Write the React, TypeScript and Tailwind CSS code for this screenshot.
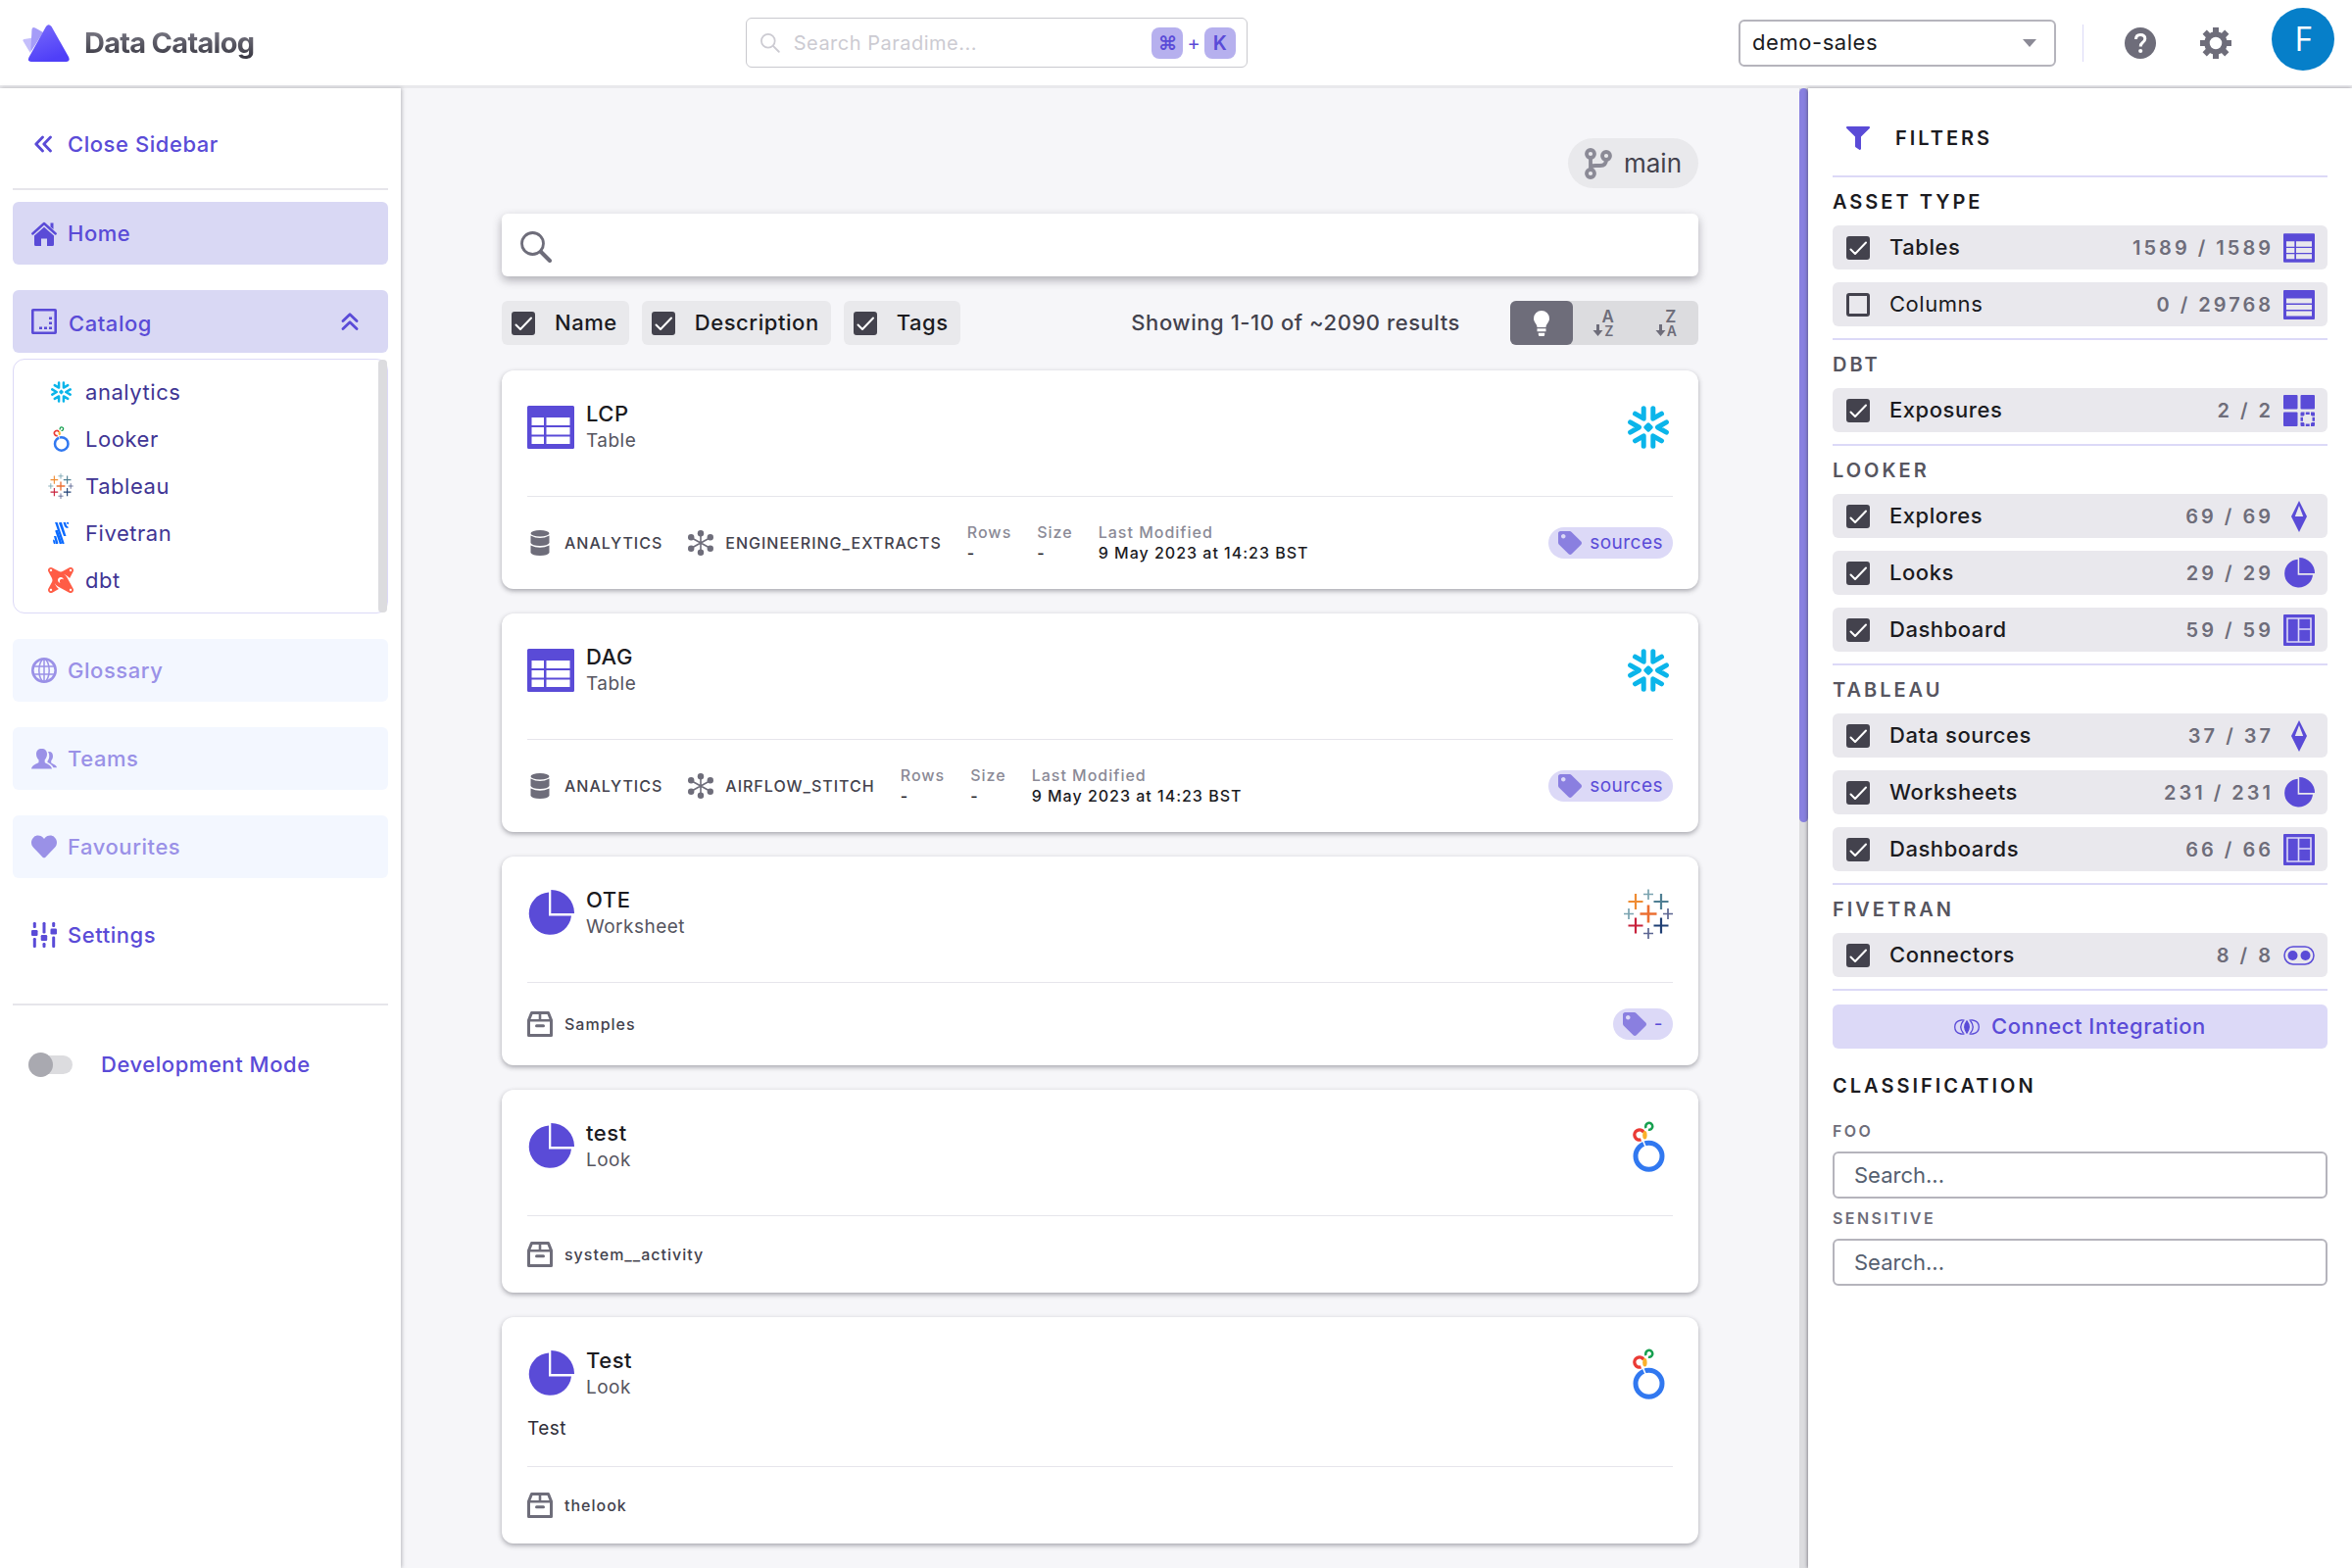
import type { ReactNode } from "react";
import { FaFilter, FaHeart, FaTag } from "react-icons/fa";
import { SiDbt } from "react-icons/si";

/* ==== Logos ==== */
const ParadimeLogo = () => (
  <svg className="w-12 h-[38px]" viewBox="0 0 48 38">
    <defs>
      <linearGradient id="logo-main" x1="0" y1="0" x2="0.4" y2="1">
        <stop offset="0" stopColor="#7a6cfb" />
        <stop offset="1" stopColor="#4f3ff8" />
      </linearGradient>
    </defs>
    <path d="M1.500 15L14 13L8 29Q6.500 27 1 17.500Q-0.500 15.500 1.500 15Z" fill="#c5bffb" />
    <path d="M9.500 5Q10 2 13 3.500L21 8L9 27L8.500 24Z" fill="#a59cf8" />
    <path
      d="M24 2Q26.500 -1.500 29.500 2L47 33Q49 37.500 44.500 38H9Q4.500 37.500 6.500 33.500Z"
      fill="url(#logo-main)"
    />
  </svg>
);

const Snowflake = ({ className }: { className: string }) => (
  <svg
    className={className}
    viewBox="0 0 42 44"
    fill="none"
    stroke="#0bb5ea"
    strokeWidth="5"
    strokeLinecap="round"
    strokeLinejoin="round"
  >
    <path d="M16.200 2.800V13.200L7.500 8.200M25.800 2.800V13.200L34.500 8.200" />
    <path d="M16.200 41.200V30.800L7.500 35.800M25.800 41.200V30.800L34.500 35.800" />
    <path d="M2.600 16.800L11.500 22L2.600 27.200M39.400 16.800L30.500 22L39.400 27.200" />
    <path d="M21 19L24 22L21 25L18 22Z" fill="#0bb5ea" strokeWidth="3.500" />
  </svg>
);

const Looker = ({ className }: { className: string }) => (
  <svg className={className} viewBox="0 0 34 52" fill="none">
    <circle cx="17.500" cy="35.800" r="13.500" stroke="#3178f0" strokeWidth="5" />
    <path d="M10.500 17.500L14.500 27" stroke="#fff" strokeWidth="1.600" />
    <path d="M9.500 18.900A5.100 5.100 0 1 1 12.300 11.400" stroke="#ea3a35" strokeWidth="3.400" />
    <ellipse cx="13.400" cy="14.300" rx="2.200" ry="4.300" fill="#fbb02a" />
    <path d="M14.700 7A3.500 3.500 0 1 1 17 8.700" stroke="#17a050" strokeWidth="2.600" />
  </svg>
);

const Tableau = ({ className }: { className: string }) => (
  <svg className={className} viewBox="0 0 50 51" fill="none">
    <path d="M25 16.500V34.500M16.500 25.500H33.500" stroke="#eb6f32" strokeWidth="2.600" />
    <path d="M12 5V21M4.500 13H19.500" stroke="#ef8c33" strokeWidth="2.200" />
    <path d="M38 5V21M30.500 13H45.500" stroke="#4f7f93" strokeWidth="2.200" />
    <path d="M12 29.500V45.500M4.500 37.500H19.500" stroke="#c8223c" strokeWidth="2.200" />
    <path d="M38 29.500V45.500M30.500 37.500H45.500" stroke="#1f3f74" strokeWidth="2.200" />
    <path d="M25 0.500V11M20 5.500H30M5 20V31M0 25.500H10" stroke="#7aa3b0" strokeWidth="1.700" />
    <path d="M25 40V51M20 45.500H30M45 20V31M40 25.500H50" stroke="#5c6692" strokeWidth="1.700" />
  </svg>
);

const Fivetran = () => (
  <svg className="w-4 h-[22px]" viewBox="0 0 16 22" fill="#0b6bff">
    <path d="M2 0H4.600L11.500 21Q12 22 11 22H9.500L2.600 1.500Z" />
    <path d="M6.300 0H8.900L13.500 14H11L6.300 1.200Z" />
    <path d="M10.500 0H13L13.700 2.500Q14 4 15.500 4.500V6Q12.500 6 11.700 3.800Z" />
    <path d="M14 0H16V1.500Q15 2.500 14.200 1Z" />
    <path d="M2.500 8H5L9 20.500Q9.300 22 8.300 22H6.800L2.500 9.500Z" />
    <path d="M1 14H3.300L5.200 20.500Q5.500 22 4.600 22H3Z" />
    <path d="M0 17.500Q2 17.500 2.500 20V22H1Q0 20 0 17.500Z" />
  </svg>
);

/* ==== Icons ==== */
const Magnifier = ({ className, handle }: { className: string; handle: number }) => (
  <svg className={className} viewBox="0 0 32 32" fill="none" stroke="currentColor">
    <circle cx="12.500" cy="12.500" r="11" strokeWidth="2.800" />
    <path d="M21 21L30 30" strokeWidth={handle} strokeLinecap="round" />
  </svg>
);

const TableIcon = ({ className }: { className: string }) => (
  <svg className={className} viewBox="0 0 48 44">
    <path
      fillRule="evenodd"
      fill="currentColor"
      d="M1.500 0H46.500Q48 0 48 1.500V42.500Q48 44 46.500 44H1.500Q0 44 0 42.500V1.500Q0 0 1.500 0Z
        M4.500 12V20H17V12Z M19.500 12V20H43.500V12Z
        M4.500 22V29.500H17V22Z M19.500 22V29.500H43.500V22Z
        M4.500 31.500V39H17V31.500Z M19.500 31.500V39H43.500V31.500Z"
    />
  </svg>
);

const ColumnsIcon = () => (
  <svg className="w-8 h-[30px]" viewBox="0 0 32 30">
    <path
      fillRule="evenodd"
      fill="currentColor"
      d="M1 0H31Q32 0 32 1V29Q32 30 31 30H1Q0 30 0 29V1Q0 0 1 0Z
        M3 8.500V13.500H29V8.500Z M3 15V20H29V15Z M3 21.500V26.500H29V21.500Z"
    />
  </svg>
);

const PieIcon = ({ className }: { className: string }) => (
  <svg className={className} viewBox="0 0 48 48" fill="currentColor">
    <path d="M22 2.500V26.500H45A21.700 21.700 0 1 1 22 2.500Z" />
    <path d="M24.300 0A23.700 23.700 0 0 1 48 24H24.300Z" />
  </svg>
);

const ExposureIcon = () => (
  <svg className="size-8" viewBox="0 0 32 32" fill="currentColor">
    <rect width="14.500" height="14.500" rx="1" />
    <rect x="17.500" width="14.500" height="14.500" rx="1" />
    <rect y="17.500" width="14.500" height="14.500" rx="1" />
    <path d="M17.500 18.500Q17.500 17.500 18.500 17.500H21.500V20.500L20.500 21.500H17.500ZM28 17.500H31Q32 17.500 32 18.500V21.500H29L28 20.500ZM17.500 28H20.500L21.500 29V32H18.500Q17.500 32 17.500 31ZM29 28H32V31Q32 32 31 32H28V29Z" />
    <path d="M22.800 17.500H26.700V20H22.800ZM22.800 29.500H26.700V32H22.800ZM17.500 22.800H20V26.700H17.500ZM29.500 22.800H32V26.700H29.500Z" />
  </svg>
);

const ExploreIcon = () => (
  <svg className="size-8" viewBox="0 0 32 32">
    <path
      fillRule="evenodd"
      fill="currentColor"
      d="M16 0L24 16L16 32L8 16ZM16 5L11.800 16H20.200Z"
    />
  </svg>
);

const DashboardIcon = () => (
  <svg className="size-8" viewBox="0 0 32 32">
    <rect width="32" height="32" rx="1" fill="#5a4bd7" />
    <path
      d="M4 4H28V28H4ZM15.500 4V28M15.500 15H28"
      fill="none"
      stroke="#dcd9f7"
      strokeWidth="1.600"
    />
  </svg>
);

const ConnectorIcon = () => (
  <svg className="size-8" viewBox="0 0 32 32" fill="currentColor">
    <rect
      x="1"
      y="7"
      width="30"
      height="18"
      rx="9"
      fill="none"
      stroke="currentColor"
      strokeWidth="1.500"
    />
    <circle cx="9.500" cy="16" r="5" />
    <circle cx="22.500" cy="16" r="5" />
  </svg>
);

const IntegrationIcon = () => (
  <svg className="w-[26px] h-4" viewBox="0 0 26 16" fill="none" stroke="currentColor" strokeWidth="1.300">
    <path d="M10.500 1.200Q8.500 0.700 7 1Q0.700 2 0.700 8Q0.700 14 7 15Q8.500 15.300 10.500 14.800" />
    <path d="M15.500 1.200Q17.500 0.700 19 1Q25.300 2 25.300 8Q25.300 14 19 15Q17.500 15.300 15.500 14.800" />
    <path d="M9.500 1.500Q4 8 9.500 14.500M16.500 1.500Q22 8 16.500 14.500" />
    <path d="M13 2Q8.500 8 13 14Q17.500 8 13 2Z" fill="currentColor" />
  </svg>
);

const HomeIcon = () => (
  <svg className="w-[26px] h-[25px]" viewBox="0 0 26 25">
    <path
      d="M1.300 12.500L13 2L24.700 12.500"
      fill="none"
      stroke="currentColor"
      strokeWidth="2.400"
      strokeLinecap="round"
      strokeLinejoin="round"
    />
    <path d="M19.500 1.500H22.500V8L19.500 5.500Z" fill="currentColor" />
    <path
      d="M13 5.800L23 14.500V23.500Q23 25 21.500 25H16V17.500H10V25H4.500Q3 25 3 23.500V14.500Z"
      fill="currentColor"
    />
  </svg>
);

const CatalogIcon = () => (
  <svg className="size-[26px]" viewBox="0 0 26 26" fill="currentColor">
    <rect x="1.300" y="1.300" width="23.400" height="23.400" rx="0.500" fill="none" stroke="currentColor" strokeWidth="2.600" />
    <path d="M18 8.500H21V11H18ZM18 13.500H21V16H18ZM18 18.500H21V21H18ZM13 18.500H16V21H13ZM8 18.500H11V21H8Z" />
  </svg>
);

const GlobeIcon = () => (
  <svg className="size-[26px]" viewBox="0 0 26 26" fill="none" stroke="currentColor">
    <circle cx="13" cy="13" r="11.700" strokeWidth="2.600" />
    <ellipse cx="13" cy="13" rx="5.200" ry="11.500" strokeWidth="1.500" />
    <path d="M2 9H24M2 17H24M13 1V25" strokeWidth="1.500" />
  </svg>
);

const TeamsIcon = () => (
  <svg className="w-[26px] h-[21px]" viewBox="0 0 26 21" fill="currentColor">
    <path d="M10.500 0C14 0 16 2 16 5.500C16 8 15 10 13.700 11.300V14C15 15.300 20.500 16.500 21 20.500H0C0.500 16.500 6 15.300 7.500 14V11.300C6 10 5 8 5 5.500C5 2 7 0 10.500 0Z" />
    <path d="M17 3C20.500 2.500 22 4.500 22 7.500C22 9.500 21.200 11.200 20.200 12.200V14.500C21.500 15.500 25.700 16.300 26 19.300H22.500C21.500 16.500 18.500 15 16.500 14V12.500C18.500 10.500 19 6 17 3Z" />
  </svg>
);

const SlidersIcon = () => (
  <svg className="size-[26px]" viewBox="0 0 26 26" fill="currentColor">
    <rect x="1.800" width="3" height="6" rx="1.200" />
    <rect y="8" width="6.500" height="6" rx="1.200" />
    <rect x="1.800" y="16" width="3" height="10" rx="1.200" />
    <rect x="11.500" width="3" height="11.500" rx="1.200" />
    <rect x="9.700" y="13" width="6.500" height="6" rx="1.200" />
    <rect x="11.500" y="21" width="3" height="5" rx="1.200" />
    <rect x="21.200" width="3" height="5" rx="1.200" />
    <rect x="19.500" y="6.500" width="6.500" height="6" rx="1.200" />
    <rect x="21.200" y="14.500" width="3" height="11.500" rx="1.200" />
  </svg>
);

const DoubleChevron = ({ className }: { className: string }) => (
  <svg
    className={className}
    viewBox="0 0 18 18"
    fill="none"
    stroke="currentColor"
    strokeWidth="2.800"
    strokeLinecap="round"
    strokeLinejoin="round"
  >
    <path d="M8.500 2L1.800 9L8.500 16M16.500 2L9.800 9L16.500 16" />
  </svg>
);

const BranchIcon = () => (
  <svg className="w-7 h-8 text-[#8b8a96]" viewBox="0 0 28 32" fill="none" stroke="currentColor" strokeWidth="3.800">
    <circle cx="6" cy="6" r="4" />
    <circle cx="6" cy="26" r="4" />
    <circle cx="22" cy="8" r="4" />
    <path d="M6 10V22M6 22Q6 18 11 18H16Q22 18 22 12" />
  </svg>
);

const HelpIcon = () => (
  <svg className="size-8" viewBox="0 0 32 32">
    <circle cx="16" cy="16" r="16" fill="currentColor" />
    <path
      d="M11.500 12Q11.500 7.500 16 7.500Q20.800 7.500 20.800 11.500Q20.800 13.800 18.300 15.500Q16.300 17 16.300 19.500"
      fill="none"
      stroke="#fff"
      strokeWidth="3"
    />
    <circle cx="16.200" cy="24" r="2.100" fill="#fff" />
  </svg>
);

const GearIcon = () => (
  <svg className="size-8" viewBox="0 0 32 32" fill="none" stroke="currentColor">
    <circle cx="16" cy="16" r="9" strokeWidth="5.500" />
    <path
      d="M16 0V5M16 27V32M0 16H5M27 16H32M4.700 4.700L8.300 8.300M23.700 23.700L27.300 27.300M4.700 27.300L8.300 23.700M23.700 8.300L27.300 4.700"
      strokeWidth="6"
    />
  </svg>
);

const BulbIcon = () => (
  <svg className="w-4 h-[26px]" viewBox="0 0 16 26" fill="#fff">
    <path d="M8 0A8 8 0 0 1 16 8C16 12 12.500 13.500 12.500 17H3.500C3.500 13.500 0 12 0 8A8 8 0 0 1 8 0Z" />
    <path d="M3.500 18.300H12.500V21.300H3.500ZM4.800 22.700H11.200V24.500Q11.200 26 9.700 26H6.300Q4.800 26 4.800 24.500Z" />
  </svg>
);

const SortIcon = ({ top, bottom }: { top: string; bottom: string }) => (
  <svg className="w-[26px] h-9" viewBox="0 -4 26 36" fill="currentColor">
    <text x="17" y="13" fontSize="17" fontWeight="600" textAnchor="middle">
      {top}
    </text>
    <text x="18" y="27" fontSize="14" fontWeight="600" textAnchor="middle">
      {bottom}
    </text>
    <path d="M5 15H8V21H11.500L6.500 27L1.500 21H5Z" />
  </svg>
);

const DatabaseIcon = () => (
  <svg className="size-[26px]" viewBox="0 0 26 26" fill="currentColor">
    <ellipse cx="13" cy="3.200" rx="9.500" ry="3.200" />
    <path d="M3.500 5.500Q13 10.500 22.500 5.500V13Q21 16 13 16Q5 16 3.500 13Z" />
    <path d="M3.500 15.500Q13 20 22.500 15.500V23Q21 26 13 26Q5 26 3.500 23Z" />
  </svg>
);

const HubIcon = () => (
  <svg className="size-[26px]" viewBox="0 0 26 26" fill="currentColor">
    <path d="M13 3V23M3 7.500L23 18.500M23 7.500L3 18.500" stroke="currentColor" strokeWidth="1.600" />
    <circle cx="13" cy="3.200" r="3.200" />
    <circle cx="13" cy="22.800" r="3.200" />
    <circle cx="3.200" cy="7.300" r="3.200" />
    <circle cx="22.800" cy="7.300" r="3.200" />
    <circle cx="3.200" cy="18.700" r="3.200" />
    <circle cx="22.800" cy="18.700" r="3.200" />
  </svg>
);

const BoxIcon = () => (
  <svg className="size-[26px]" viewBox="0 0 26 26" fill="none" stroke="currentColor">
    <path d="M1.500 9L4.500 1.500H21.500L24.500 9V24.500H1.500Z" strokeWidth="3" strokeLinejoin="round" />
    <path d="M1.500 9.300H24.500M13 1.500V9" strokeWidth="2.600" />
    <path d="M9.500 14.800H16.500" strokeWidth="3" strokeLinecap="round" />
  </svg>
);

/* ==== Data ==== */
const sources = [
  { name: "analytics", icon: <Snowflake className="w-[21px] h-[22px]" /> },
  { name: "Looker", icon: <Looker className="w-[17px] h-[26px]" /> },
  { name: "Tableau", icon: <Tableau className="size-[26px]" /> },
  { name: "Fivetran", icon: <Fivetran /> },
  { name: "dbt", icon: <SiDbt className="size-[26px] text-[#ff5c45]" /> },
];

const disabledLinks = [
  { name: "Glossary", icon: <GlobeIcon /> },
  { name: "Teams", icon: <TeamsIcon /> },
  { name: "Favourites", icon: <FaHeart className="size-[26px]" /> },
];

type Filter = {
  name: string;
  count: string;
  icon: ReactNode;
  off?: boolean;
};

const filterGroups: { title: string; items: Filter[] }[] = [
  {
    title: "ASSET TYPE",
    items: [
      { name: "Tables", count: "1589 / 1589", icon: <TableIcon className="w-8 h-[30px]" /> },
      { name: "Columns", count: "0 / 29768", icon: <ColumnsIcon />, off: true },
    ],
  },
  {
    title: "DBT",
    items: [{ name: "Exposures", count: "2 / 2", icon: <ExposureIcon /> }],
  },
  {
    title: "LOOKER",
    items: [
      { name: "Explores", count: "69 / 69", icon: <ExploreIcon /> },
      { name: "Looks", count: "29 / 29", icon: <PieIcon className="size-8" /> },
      { name: "Dashboard", count: "59 / 59", icon: <DashboardIcon /> },
    ],
  },
  {
    title: "TABLEAU",
    items: [
      { name: "Data sources", count: "37 / 37", icon: <ExploreIcon /> },
      { name: "Worksheets", count: "231 / 231", icon: <PieIcon className="size-8" /> },
      { name: "Dashboards", count: "66 / 66", icon: <DashboardIcon /> },
    ],
  },
  {
    title: "FIVETRAN",
    items: [{ name: "Connectors", count: "8 / 8", icon: <ConnectorIcon /> }],
  },
];

type Result = {
  title: string;
  kind: string;
  icon: ReactNode;
  logo: ReactNode;
  description?: string;
  schema?: string;
  folder?: string;
  tag?: string;
};

const tableIcon = <TableIcon className="w-12 h-11" />;
const pieIcon = <PieIcon className="size-12" />;
const snowflakeLogo = <Snowflake className="w-[42px] h-11" />;
const lookerLogo = <Looker className="w-[34px] h-[52px]" />;

const results: Result[] = [
  { title: "LCP", kind: "Table", icon: tableIcon, logo: snowflakeLogo, schema: "ENGINEERING_EXTRACTS", tag: "sources" },
  { title: "DAG", kind: "Table", icon: tableIcon, logo: snowflakeLogo, schema: "AIRFLOW_STITCH", tag: "sources" },
  { title: "OTE", kind: "Worksheet", icon: pieIcon, logo: <Tableau className="w-[50px] h-[51px]" />, folder: "Samples", tag: "-" },
  { title: "test", kind: "Look", icon: pieIcon, logo: lookerLogo, folder: "system__activity" },
  { title: "Test", kind: "Look", icon: pieIcon, logo: lookerLogo, folder: "thelook", description: "Test" },
];

/* ==== Shared ==== */
const Checkbox = ({ id, off }: { id: string; off?: boolean }) => (
  <span className="grid size-6 shrink-0">
    <input
      className="peer col-start-1 row-start-1 size-6 appearance-none rounded-[3px] border-[3px] border-[#43424d] checked:bg-[#43424d]"
      type="checkbox"
      id={id}
      defaultChecked={!off}
    />
    <svg
      className="pointer-events-none col-start-1 row-start-1 hidden size-6 peer-checked:block"
      viewBox="0 0 24 24"
      fill="none"
      stroke="#fff"
      strokeWidth="2"
      strokeLinecap="round"
      strokeLinejoin="round"
    >
      <path d="M4.500 13.500L9 18L20 6.500" />
    </svg>
  </span>
);

const Header = () => (
  <header className="flex h-[90px] shrink-0 items-center justify-between border-b-3 border-[#e9e9ec] bg-white pl-[23px] pr-[18px]">
    <div className="flex items-center gap-[15px]">
      <ParadimeLogo />
      <h1 className="bg-linear-to-b from-[#8b8a96] to-[#2f2e38] bg-clip-text text-[29px] leading-10 font-bold tracking-tight text-transparent">
        Data Catalog
      </h1>
    </div>

    <label className="flex h-[51px] w-[512px] items-center rounded-md border border-[#c9c9ce] pr-[11px] pl-[14px] text-[#cccbd2]">
      <Magnifier className="size-5 shrink-0" handle={3} />
      <input
        className="ml-[14px] min-w-0 flex-1 text-[20px] tracking-wide outline-none placeholder:text-[#cccbd2]"
        type="text"
        name="global-search"
        aria-label="Search Paradime"
        placeholder="Search Paradime..."
      />
      <span className="flex items-center gap-1 text-[20px] font-semibold text-[#5a4bd7]">
        <kbd className="grid size-8 place-items-center rounded-lg bg-[#b6b0ee] font-[Inter,sans-serif]">⌘</kbd>
        <span className="font-normal">+</span>
        <kbd className="grid size-8 place-items-center rounded-lg bg-[#b6b0ee] font-[Inter,sans-serif]">K</kbd>
      </span>
    </label>

    <div className="flex items-center text-[#6e6d7a]">
      <div className="relative">
        <select
          className="h-12 w-[324px] appearance-none rounded-md border-2 border-[#b5b4bc] bg-white px-3 text-[22px] tracking-wide text-[#1b1b1f]"
          aria-label="Workspace"
        >
          <option>demo-sales</option>
        </select>
        <svg className="pointer-events-none absolute top-5 right-5 h-2 w-[14px]" viewBox="0 0 14 8">
          <path d="M0 0H14L7 8Z" fill="#8b8a96" />
        </svg>
      </div>
      <div className="ml-[27px] h-[38px] w-px bg-[#dcd9f7]" />
      <div className="ml-[42px] flex items-center gap-[45px]">
        <button aria-label="Help">
          <HelpIcon />
        </button>
        <button aria-label="Settings">
          <GearIcon />
        </button>
      </div>
      <button className="mb-2 ml-[41px] size-16 rounded-full bg-[#067fc9] font-['Open_Sans',sans-serif] text-[34px] text-white">
        F
      </button>
    </div>
  </header>
);

const Sidebar = () => (
  <nav className="z-10 flex w-[409px] shrink-0 flex-col bg-white px-[13px] text-[22px] font-medium tracking-wide text-[#5a4bd7] shadow-[1px_0_4px_rgba(67,66,77,0.35)]">
    <div className="flex h-[104px] shrink-0 border-b-2 border-[#e6e5eb] pt-3">
      <button className="flex flex-1 items-center gap-4 pl-[22px]">
        <DoubleChevron className="size-[18px]" />
        Close Sidebar
      </button>
    </div>

    <a className="mt-3 flex h-16 items-center gap-[11px] rounded-md bg-[#d9d8f4] px-[19px]" href="#home">
      <HomeIcon />
      Home
    </a>

    {/* == Catalog == */}
    <button className="mt-[26px] flex h-16 items-center gap-3 rounded-md bg-[#d9d8f4] pl-[19px] pr-[30px]">
      <CatalogIcon />
      <span className="flex-1 pt-1 text-left">Catalog</span>
      <DoubleChevron className="size-[18px] rotate-90" />
    </button>
    <div className="mt-1.5 flex rounded-xl border border-[#dcd9f7]">
      <ul className="flex-1 py-[9px] text-[#3f3594]">
        {sources.map((source) => (
          <li key={source.name}>
            <a className="flex h-12 items-center gap-3 pl-[35px] font-normal" href={"#" + source.name}>
              <span className="grid w-[26px] place-items-center">{source.icon}</span>
              {source.name}
            </a>
          </li>
        ))}
      </ul>
      <div className="w-[9px] rounded bg-[#dcdcdf]" />
    </div>

    {disabledLinks.map((link) => (
      <a
        className="mt-[26px] flex h-16 items-center gap-[11px] rounded-md bg-[#f3f7ff] px-[19px] text-[#9a91e7]"
        href={"#" + link.name}
        key={link.name}
      >
        {link.icon}
        {link.name}
      </a>
    ))}

    <a className="mt-[26px] flex h-16 items-center gap-[11px] px-[19px]" href="#settings">
      <SlidersIcon />
      Settings
    </a>

    <label className="mt-[38px] flex items-center gap-[29px] border-t-2 border-[#e6e5eb] pt-[44px] pl-4" htmlFor="dev-mode">
      <input
        className="relative h-[25px] w-[45px] appearance-none before:absolute before:top-[3px] before:left-1 before:h-[19px] before:w-[41px] before:rounded-full before:bg-[#dcdcdf] after:absolute after:size-[25px] after:rounded-full after:bg-[#a9a9b0]"
        type="checkbox"
        role="switch"
        id="dev-mode"
      />
      Development Mode
    </label>
  </nav>
);

const Meta = ({ label, value }: { label: string; value: string }) => (
  <div className="leading-[21px]">
    <p className="text-[#8b8a96]">{label}</p>
    <p className="text-[#1b1b1f]">{value}</p>
  </div>
);

const ResultCard = ({ result }: { result: Result }) => (
  <article className="rounded-xl bg-white px-[26px] shadow-[0_2px_5px_rgba(67,66,77,0.45)]">
    <div className="border-b border-[#e6e5eb] pt-[30px] pb-[26px]">
      <div className="flex h-14 items-center">
        <div className="text-[#5a4bd7]">{result.icon}</div>
        <div className="ml-3 flex-1">
          <h2 className="text-[22px] leading-7 font-medium tracking-wide text-[#1b1b1f]">{result.title}</h2>
          <p className="text-[19px] leading-7 tracking-wide text-[#56555f]">{result.kind}</p>
        </div>
        <div className="grid w-[50px] place-items-center">{result.logo}</div>
      </div>
      <p className="mt-4 text-[19px] leading-6 tracking-wide text-[#2f2e38]">{result.description}</p>
    </div>

    <div className="flex items-center gap-[26px] py-[26px] text-[16px] leading-6 font-medium tracking-[1px] text-[#43424d]">
      {result.schema && (
        <>
          <div className="flex items-center gap-3">
            <span className="text-[#6e6d7a]">
              <DatabaseIcon />
            </span>
            ANALYTICS
          </div>
          <div className="flex items-center gap-3">
            <span className="text-[#6e6d7a]">
              <HubIcon />
            </span>
            {result.schema}
          </div>
          <Meta label="Rows" value="-" />
          <Meta label="Size" value="-" />
          <Meta label="Last Modified" value="9 May 2023 at 14:23 BST" />
        </>
      )}
      {result.folder && (
        <div className="flex items-center gap-3">
          <span className="text-[#6e6d7a]">
            <BoxIcon />
          </span>
          {result.folder}
        </div>
      )}
      {result.tag && (
        <span className="ml-auto flex h-8 items-center gap-2 rounded-full bg-[#dcd9f7] px-[10px] text-[19px] font-normal tracking-wide text-[#5a4bd7]">
          <FaTag className="size-6 text-[#8a7fe0]" />
          {result.tag}
        </span>
      )}
    </div>
  </article>
);

const Results = () => (
  <main className="min-w-0 flex-1 overflow-hidden px-[103px] pt-[51px]">
    <div className="flex justify-end">
      <button className="flex h-[51px] items-center gap-3 rounded-full bg-[#e9e9ec] px-[17px] text-[26px] text-[#43424d]">
        <BranchIcon />
        main
      </button>
    </div>

    <label className="mt-[26px] flex h-16 items-center rounded-md bg-white px-[19px] pt-1 text-[#6e6d7a] shadow-[0_4px_10px_rgba(67,66,77,0.4)]">
      <Magnifier className="size-8" handle={4} />
      <input className="ml-4 flex-1 text-[22px] outline-none" type="text" name="catalog-search" aria-label="Search catalog" />
    </label>

    {/* == Search fields && sort == */}
    <div className="mt-[25px] flex items-center text-[22px] font-medium tracking-wide">
      <div className="flex gap-[13px] text-[#1b1b1f]">
        {["Name", "Description", "Tags"].map((field) => (
          <label
            className="flex h-[45px] items-center gap-5 rounded-md bg-[#e9e9ec] pr-3 pl-[10px]"
            htmlFor={field}
            key={field}
          >
            <Checkbox id={field} />
            {field}
          </label>
        ))}
      </div>
      <p className="ml-auto text-[#43424d]">Showing 1-10 of ~2090 results</p>
      <div className="ml-[51px] flex h-[45px] rounded-md bg-[#dcdcdf] text-[#6e6d7a]">
        <button className="grid w-16 place-items-center rounded-md bg-[#6e6d7a]" aria-label="Relevance">
          <BulbIcon />
        </button>
        <button className="grid w-16 place-items-center" aria-label="Sort A to Z">
          <SortIcon top="A" bottom="Z" />
        </button>
        <button className="grid w-16 place-items-center" aria-label="Sort Z to A">
          <SortIcon top="Z" bottom="A" />
        </button>
      </div>
    </div>

    <div className="mt-[26px] flex flex-col gap-[25px]">
      {results.map((result) => (
        <ResultCard result={result} key={result.title} />
      ))}
    </div>
  </main>
);

const Filters = () => (
  <aside className="z-10 w-[555px] shrink-0 bg-white px-[25px] text-[#1b1b1f] shadow-[-1px_0_3px_rgba(67,66,77,0.5)]">
    <h2 className="flex h-[89px] items-center gap-[26px] px-[14px] pt-3 text-[20px] font-semibold tracking-[0.15em]">
      <FaFilter className="size-6 text-[#5a4bd7]" />
      FILTERS
    </h2>

    {filterGroups.map((group, index) => (
      <section className="mb-3 border-t-2 border-[#dcd9f7]" key={group.title}>
        <h3
          className={
            "flex h-[49px] items-center text-[20px] font-semibold tracking-[0.15em] " +
            (index === 0 ? "text-[#1b1b1f]" : "text-[#56555f]")
          }
        >
          {group.title}
        </h3>
        <div className="flex flex-col gap-[13px]">
          {group.items.map((item) => (
            <label
              className="flex h-[45px] items-center rounded-md bg-[#e9e8ed] pr-[13px] pl-[14px] text-[22px] font-medium tracking-wide"
              htmlFor={item.name}
              key={item.name}
            >
              <Checkbox id={item.name} off={item.off} />
              <span className={"ml-5 flex-1 " + (item.off ? "font-normal" : "")}>{item.name}</span>
              <span className="mr-[10px] text-[20px] font-semibold tracking-[0.15em] text-[#6e6d7a]">{item.count}</span>
              <span className="text-[#5a4bd7]">{item.icon}</span>
            </label>
          ))}
        </div>
      </section>
    ))}

    <div className="border-t-2 border-[#dcd9f7] pt-[14px]">
      <button className="flex h-[45px] w-full items-center justify-center gap-3 rounded-md bg-[#dcd9f7] text-[22px] font-medium tracking-wide text-[#5a4bd7]">
        <IntegrationIcon />
        Connect Integration
      </button>
    </div>

    {/* == Classification == */}
    <h3 className="mt-6 text-[20px] leading-7 font-semibold tracking-[0.15em]">CLASSIFICATION</h3>
    <div className="mt-3 flex flex-col">
      {["FOO", "SENSITIVE"].map((field) => (
        <label className="block text-[16px] leading-[41px] font-semibold tracking-[0.15em] text-[#6e6d7a]" key={field}>
          {field}
          <input
            className="block h-12 w-full rounded-md border-2 border-[#b5b4bc] px-5 text-[22px] font-normal tracking-normal placeholder:text-[#556070]"
            type="text"
            name={field}
            placeholder="Search..."
          />
        </label>
      ))}
    </div>
  </aside>
);

export default function App() {
  return (
    <div className="flex h-screen flex-col overflow-hidden bg-[#f6f6f9] font-[Inter,sans-serif]">
      <Header />
      <div className="flex min-h-0 flex-1">
        <Sidebar />
        <Results />
        <div className="w-[9px] shrink-0 bg-[#dcdcdf]">
          <div className="h-[749px] rounded-full bg-[#8880e0]" />
        </div>
        <Filters />
      </div>
    </div>
  );
}
